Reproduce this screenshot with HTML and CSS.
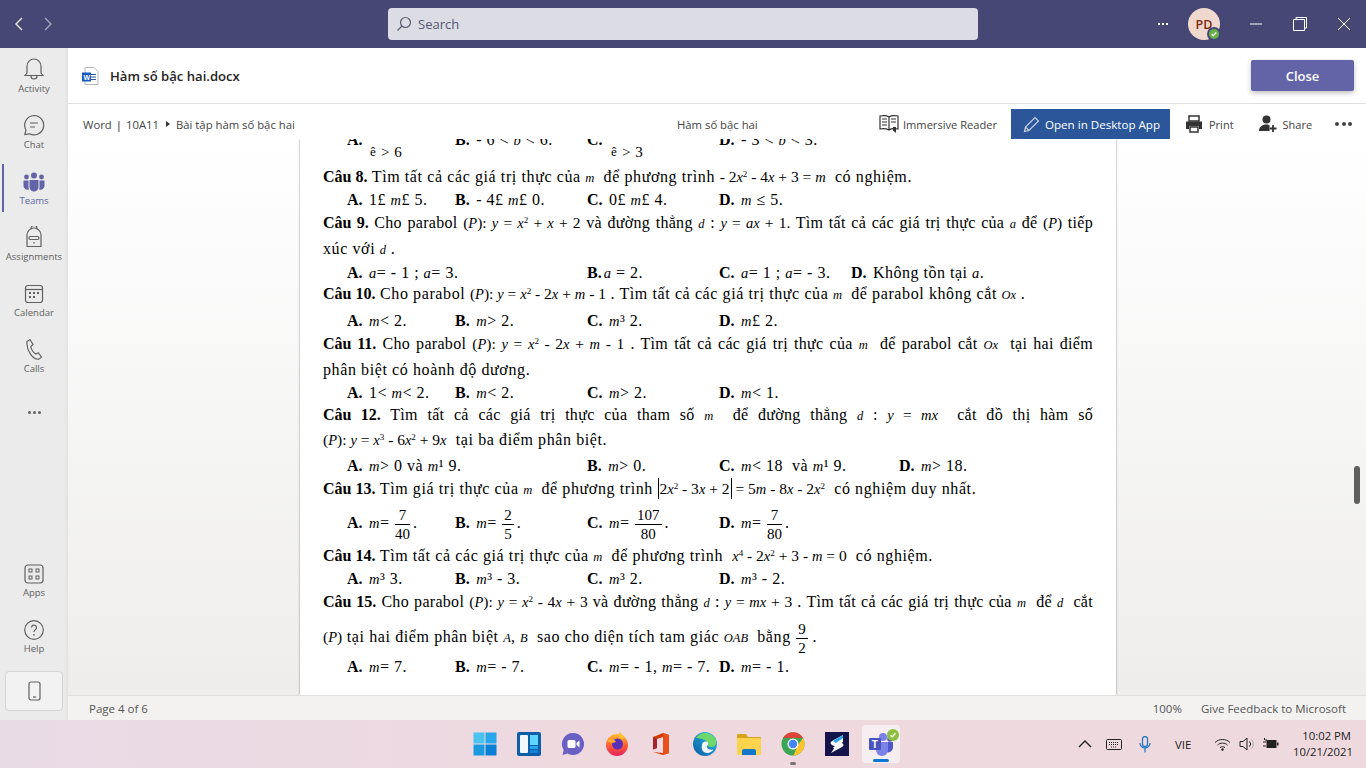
FILE: index.html
```html
<!DOCTYPE html>
<html lang="vi">
<head>
<meta charset="utf-8">
<title>Hàm số bậc hai.docx</title>
<link rel="stylesheet" href="styles.css">
</head>
<body>
<div class="app">
  <header class="titlebar">
    <div class="nav">
      <svg width="12" height="16" viewBox="0 0 12 16"><path d="M9 2 3 8l6 6" class="st-w"/></svg>
      <svg width="12" height="16" viewBox="0 0 12 16"><path d="m3 2 6 6-6 6" class="st-dim"/></svg>
    </div>
    <div class="search">
      <svg width="16" height="16" viewBox="0 0 16 16"><circle cx="9.500" cy="6.500" r="5" class="st-s"/><path d="M6 10 1.500 14.500" class="st-s"/></svg>
      <span>Search</span>
    </div>
    <div class="title-right">
      <span class="dots-w"><i></i><i></i><i></i></span>
      <span class="avatar">PD<span class="presence"><svg width="10" height="10" viewBox="0 0 10 10"><path d="m2.700 5.200 1.600 1.500 3-3.200" class="st-check"/></svg></span></span>
      <span class="win-btns">
        <svg width="14" height="14" viewBox="0 0 14 14"><path d="M1 7h12" class="st-wt"/></svg>
        <svg width="16" height="16" viewBox="0 0 16 16"><path d="M1.500 3.500h11v11h-11zM4 3.500V1.500h10.500V12h-2" class="st-wt"/></svg>
        <svg width="14" height="14" viewBox="0 0 14 14"><path d="m1 1 12 12M13 1 1 13" class="st-wt"/></svg>
      </span>
    </div>
  </header>

  <div class="main">
    <nav class="rail">
      <div class="rail-item">
        <svg width="20" height="22" viewBox="0 0 20 22"><path d="M3 15V8a7 7 0 0 1 14 0v7l2 2.500H1zM7 18a3 3 0 0 0 6 0" class="st-r"/></svg>
        <span>Activity</span>
      </div>
      <div class="rail-item">
        <svg width="22" height="22" viewBox="0 0 22 22"><path d="M11 1.500a9.700 9.700 0 1 1-4.500 18.300L1.800 20.500l1.200-4.500A9.700 9.700 0 0 1 11 1.500zM7 9h8M7 13h5" class="st-r"/></svg>
        <span>Chat</span>
      </div>
      <div class="rail-item active">
        <svg width="22" height="20" viewBox="0 0 22 20"><g class="fill-p"><circle cx="11" cy="3.500" r="3"/><circle cx="3.500" cy="5" r="2.400"/><circle cx="18.500" cy="5" r="2.400"/><path d="M6.500 8h9v7a4.500 4.500 0 0 1-9 0zM.5 8.500h5V15q0 1 .4 2.400A4 4 0 0 1 .5 13zM16.500 8.500h5V13a4 4 0 0 1-5.400 4.400q.4-1.400.4-2.400z"/></g></svg>
        <span>Teams</span>
      </div>
      <div class="rail-item">
        <svg width="18" height="22" viewBox="0 0 18 22"><path d="M2 20.500V9a7 7 0 0 1 14 0v11.500zM6 3.500v-1a3 3 0 0 1 6 0v1M5.500 10.500h7a1 1 0 0 1 0 3h-7a1 1 0 0 1 0-3zM9 16v1.500" class="st-r"/></svg>
        <span>Assignments</span>
      </div>
      <div class="rail-item">
        <svg width="20" height="20" viewBox="0 0 20 20"><rect x="1.500" y="1.500" width="17" height="17" rx="2.500" class="st-r"/><path d="M1.500 5.500h17" class="st-r"/><g class="fill-g"><rect x="5" y="8" width="2" height="2"/><rect x="9" y="8" width="2" height="2"/><rect x="13" y="8" width="2" height="2"/><rect x="5" y="12" width="2" height="2"/><rect x="9" y="12" width="2" height="2"/></g></svg>
        <span>Calendar</span>
      </div>
      <div class="rail-item">
        <svg width="18" height="22" viewBox="0 0 18 22"><path d="M2 3.500 5 1.500l3 5-2.200 2c.5 3 2.500 6 5 7.500l2.500-1.300 3.200 4.500-2.800 2C8 22 1 12 2 3.500z" class="st-r"/></svg>
        <span>Calls</span>
      </div>
      <div class="rail-more"><i></i><i></i><i></i></div>
      <div class="rail-spacer"></div>
      <div class="rail-item">
        <svg width="20" height="20" viewBox="0 0 20 20"><rect x="1" y="1" width="18" height="18" rx="3" class="st-r"/><rect x="5" y="5" width="3" height="3" class="st-r1"/><rect x="12" y="5" width="3" height="3" class="st-r1"/><rect x="5" y="12" width="3" height="3" class="st-r1"/><rect x="12" y="12" width="3" height="3" class="st-r1"/></svg>
        <span>Apps</span>
      </div>
      <div class="rail-item">
        <svg width="20" height="20" viewBox="0 0 20 20"><circle cx="10" cy="10" r="9.300" class="st-r"/><path d="M7.500 7.500a2.500 2.500 0 1 1 3.800 2.200c-1 .6-1.300 1-1.300 2.300" class="st-r"/><circle cx="10" cy="14.800" r=".9" class="fill-g"/></svg>
        <span>Help</span>
      </div>
      <div class="rail-phone">
        <svg width="13" height="20" viewBox="0 0 13 20"><rect x="1" y="1" width="11" height="18" rx="2" class="st-r"/><path d="M5 16h3" class="st-r"/></svg>
      </div>
    </nav>

    <section class="viewer">
      <div class="file-head">
        <svg width="18" height="18" viewBox="0 0 18 18">
          <path d="M4 .5h9l4 4v13H4z" fill="#fff" stroke="#b8b8b8"/>
          <path d="M10 7.500h5M10 10h5M10 12.500h5" stroke="#2b579a"/>
          <rect x="1" y="5.500" width="9" height="9" fill="#185abd"/>
          <text x="2.500" y="12.500" class="w-letter">W</text>
        </svg>
        <span class="file-name">Hàm số bậc hai.docx</span>
        <button class="close-btn">Close</button>
      </div>

      <div class="ribbon">
        <div class="crumbs">Word <span class="sep">|</span> 10A11 <span class="tri"></span> Bài tập hàm số bậc hai</div>
        <div class="doc-title">Hàm số bậc hai</div>
        <div class="rb-item reader">
          <svg width="21" height="20" viewBox="0 0 21 20"><path d="M10 3C8 1.500 4 1.500 1 2v13c3-.5 6-.5 9 1 2-1.500 6-1.500 9-1V2c-3-.5-7-.5-9 1zM10 3v13M3 5h5M3 8h5M3 11h5M12 5h5M12 8h5" class="st-d"/><path d="M14 13h3v6l-3-2.500z" fill="#333"/></svg>
          <span>Immersive Reader</span>
        </div>
        <div class="open-desktop">
          <svg width="17" height="17" viewBox="0 0 17 17"><path d="M1.500 15.500 2.500 11 12 1.500l3.500 3.500L6 14.500zM2.500 11 6 14.500" class="st-pen"/></svg>
          <span>Open in Desktop App</span>
        </div>
        <div class="rb-item print">
          <svg width="18" height="18" viewBox="0 0 18 18"><path d="M4 1h10v5H4z" fill="none" stroke="#333" stroke-width="1.500"/><path d="M1 6.500h16V14h-3v-3H4v3H1z" fill="#333"/><path d="M5 12h8v5H5z" fill="none" stroke="#333" stroke-width="1.500"/></svg>
          <span>Print</span>
        </div>
        <div class="rb-item share">
          <svg width="18" height="18" viewBox="0 0 18 18"><circle cx="7.500" cy="4.500" r="4" fill="#333"/><path d="M0 16c0-4 3-6.500 7.500-6.500 1.500 0 2.500.3 3 .6V16z" fill="#333"/><path d="M14 10v7M10.500 13.500h7" stroke="#333" stroke-width="1.800"/></svg>
          <span>Share</span>
        </div>
        <div class="rb-dots"><i></i><i></i><i></i></div>
      </div>

      <div class="doc">
        <article class="page">
          <div class="opts o-std cut"><span><b>A.</b></span><span><b>B.</b> - 6 &lt; <em>b</em> &lt; 6.</span><span><b>C.</b></span><span><b>D.</b> - 3 &lt; <em>b</em> &lt; 3.</span></div>
          <div class="opts o-brace cut2"><span class="brace-row"><span class="brk">ê</span>&gt; 6</span><span class="brace-row"><span class="brk">ê</span>&gt; 3</span></div>

          <p class="ln g5"><b>Câu 8.</b> Tìm tất cả các giá trị thực của <em>m</em>&nbsp; để phương trình <span class="math">- 2<em>x</em><sup>2</sup> - 4<em>x</em> + 3 = <em>m</em></span>&nbsp; có nghiệm.</p>
          <div class="opts o-std g3"><span><b>A.</b> 1£ <em>m</em>£ 5.</span><span><b>B.</b> - 4£ <em>m</em>£ 0.</span><span><b>C.</b> 0£ <em>m</em>£ 4.</span><span><b>D.</b> <em>m</em> ≤ 5.</span></div>

          <p class="ln just g3"><b>Câu 9.</b> Cho parabol <span class="math">(<em>P</em>): <em>y</em> = <em>x</em><sup>2</sup> + <em>x</em> + 2</span> và đường thẳng <em>d</em> : <span class="math"><em>y</em> = <em>ax</em> + 1.</span> Tìm tất cả các giá trị thực của <em>a</em> để <span class="math">(<em>P</em>)</span> tiếp</p>
          <p class="ln g6">xúc với <em>d</em> .</p>
          <div class="opts o-wide g4"><span><b>A.</b> <em>a</em>= - 1 ; <em>a</em>= 3.</span><span><b>B.</b><em>a</em> = 2.</span><span><b>C.</b> <em>a</em>= 1 ; <em>a</em>= - 3.</span><span><b>D.</b> Không tồn tại <em>a</em>.</span></div>

          <p class="ln g1"><b>Câu 10.</b> Cho parabol <span class="math">(<em>P</em>): <em>y</em> = <em>x</em><sup>2</sup> - 2<em>x</em> + <em>m</em> - 1</span> . Tìm tất cả các giá trị thực của <em>m</em>&nbsp; để parabol không cắt <em>Ox</em> .</p>
          <div class="opts o-std g7"><span><b>A.</b> <em>m</em>&lt; 2.</span><span><b>B.</b> <em>m</em>&gt; 2.</span><span><b>C.</b> <em>m</em>³ 2.</span><span><b>D.</b> <em>m</em>£ 2.</span></div>

          <p class="ln just g3"><b>Câu 11.</b> Cho parabol <span class="math">(<em>P</em>): <em>y</em> = <em>x</em><sup>2</sup> - 2<em>x</em> + <em>m</em> - 1</span> . Tìm tất cả các giá trị thực của <em>m</em>&nbsp; để parabol cắt <em>Ox</em>&nbsp; tại hai điểm</p>
          <p class="ln g6">phân biệt có hoành độ dương.</p>
          <div class="opts o-std g3"><span><b>A.</b> 1&lt; <em>m</em>&lt; 2.</span><span><b>B.</b> <em>m</em>&lt; 2.</span><span><b>C.</b> <em>m</em>&gt; 2.</span><span><b>D.</b> <em>m</em>&lt; 1.</span></div>

          <p class="ln just g2"><b>Câu 12.</b> Tìm tất cả các giá trị thực của tham số <em>m</em>&nbsp; để đường thẳng <em>d</em> : <span class="math"><em>y</em> = <em>mx</em></span>&nbsp; cắt đồ thị hàm số</p>
          <p class="ln g5"><span class="math">(<em>P</em>): <em>y</em> = <em>x</em><sup>3</sup> - 6<em>x</em><sup>2</sup> + 9<em>x</em></span>&nbsp; tại ba điểm phân biệt.</p>
          <div class="opts o-d12 g6"><span><b>A.</b> <em>m</em>&gt; 0 và <em>m</em>¹ 9.</span><span><b>B.</b> <em>m</em>&gt; 0.</span><span><b>C.</b> <em>m</em>&lt; 18&nbsp; và <em>m</em>¹ 9.</span><span><b>D.</b> <em>m</em>&gt; 18.</span></div>

          <p class="ln g3"><b>Câu 13.</b> Tìm giá trị thực của <em>m</em>&nbsp; để phương trình <span class="math"><span class="abs">2<em>x</em><sup>2</sup> - 3<em>x</em> + 2</span> = 5<em>m</em> - 8<em>x</em> - 2<em>x</em><sup>2</sup></span>&nbsp; có nghiệm duy nhất.</p>
          <div class="opts o-std g14">
            <span><b>A.</b> <em>m</em>= <span class="frac"><span>7</span><span>40</span></span>.</span>
            <span><b>B.</b> <em>m</em>= <span class="frac"><span>2</span><span>5</span></span>.</span>
            <span><b>C.</b> <em>m</em>= <span class="frac"><span>107</span><span>80</span></span>.</span>
            <span><b>D.</b> <em>m</em>= <span class="frac"><span>7</span><span>80</span></span>.</span>
          </div>

          <p class="ln g13"><b>Câu 14.</b> Tìm tất cả các giá trị thực của <em>m</em>&nbsp; để phương trình&nbsp; <span class="math"><em>x</em><sup>4</sup> - 2<em>x</em><sup>2</sup> + 3 - <em>m</em> = 0</span>&nbsp; có nghiệm.</p>
          <div class="opts o-std g3"><span><b>A.</b> <em>m</em>³ 3.</span><span><b>B.</b> <em>m</em>³ - 3.</span><span><b>C.</b> <em>m</em>³ 2.</span><span><b>D.</b> <em>m</em>³ - 2.</span></div>

          <p class="ln just g3"><b>Câu 15.</b> Cho parabol <span class="math">(<em>P</em>): <em>y</em> = <em>x</em><sup>2</sup> - 4<em>x</em> + 3</span> và đường thẳng <em>d</em> : <span class="math"><em>y</em> = <em>mx</em> + 3</span> . Tìm tất cả các giá trị thực của <em>m</em>&nbsp; để <em>d</em>&nbsp; cắt</p>
          <p class="ln g15"><span class="math">(<em>P</em>)</span> tại hai điểm phân biệt <em>A</em>, <em>B</em>&nbsp; sao cho diện tích tam giác <em>OAB</em>&nbsp; bằng <span class="frac"><span>9</span><span>2</span></span> .</p>
          <div class="opts o-std g10"><span><b>A.</b> <em>m</em>= 7.</span><span><b>B.</b> <em>m</em>= - 7.</span><span><b>C.</b> <em>m</em>= - 1, <em>m</em>= - 7.</span><span><b>D.</b> <em>m</em>= - 1.</span></div>
        </article>
        <div class="thumb"></div>
      </div>

      <div class="statusbar">
        <span class="pg">Page 4 of 6</span>
        <span class="zoom">100%</span>
        <span class="fb">Give Feedback to Microsoft</span>
      </div>
    </section>
  </div>

  <footer class="taskbar">
    <div class="tb-icons">
      <span class="tb">
        <svg width="24" height="24" viewBox="0 0 24 24"><rect x=".5" y=".5" width="11" height="11" fill="#4cc2f1"/><rect x="12.500" y=".5" width="11" height="11" fill="#28a8ea"/><rect x=".5" y="12.500" width="11" height="11" fill="#1a9bdf"/><rect x="12.500" y="12.500" width="11" height="11" fill="#0a7fd6"/></svg>
      </span>
      <span class="tb">
        <svg width="24" height="24" viewBox="0 0 24 24"><rect width="24" height="24" rx="2" fill="#0f5fa8"/><rect x="3" y="3" width="8" height="18" rx="1" fill="#f4f8fc"/><rect x="13" y="3" width="8" height="10" fill="#5fd4ff"/><rect x="13" y="14" width="8" height="3" fill="#29a5ee"/><rect x="13" y="18" width="8" height="3" fill="#1583d8"/></svg>
      </span>
      <span class="tb">
        <svg width="24" height="24" viewBox="0 0 24 24"><path d="M12 1a11 11 0 1 1-5.500 20.500L1.500 23l1.200-5A11 11 0 0 1 12 1z" fill="#6a60c4"/><rect x="6.500" y="8" width="8" height="8" rx="1.500" fill="#fff"/><path d="m15.500 11 3-2.500v7l-3-2.500z" fill="#fff"/></svg>
      </span>
      <span class="tb">
        <svg width="24" height="24" viewBox="0 0 24 24"><defs><linearGradient id="ff" x1="0" y1="0" x2="0" y2="1"><stop offset="0" stop-color="#ffbd2e"/><stop offset=".55" stop-color="#ff5a35"/><stop offset="1" stop-color="#e3215f"/></linearGradient></defs><circle cx="12" cy="13" r="11" fill="url(#ff)"/><path d="M14 0c3 2 5 4 6 7l-6-1z" fill="#ffc22e"/><circle cx="12.500" cy="12" r="5.500" fill="#5b2fb5"/><path d="M2 9c3-2 7-2 9 1l-4 1z" fill="#ffb02e"/></svg>
      </span>
      <span class="tb">
        <svg width="24" height="24" viewBox="0 0 24 24"><path d="M4 5 14 1l6 2v18l-6 2-10-3 10 1V5l-6 2v9l-4 1.500z" fill="#d83b01"/><path d="M14 1l6 2v18l-6 2z" fill="#e8501c"/><path d="M4 5l4 2v9l-4 1.500z" fill="#a4262c"/></svg>
      </span>
      <span class="tb">
        <svg width="24" height="24" viewBox="0 0 24 24"><defs><linearGradient id="ed" x1="0" y1="1" x2="1" y2="0"><stop offset="0" stop-color="#0c59a4"/><stop offset="1" stop-color="#2fc3e8"/></linearGradient></defs><circle cx="12" cy="12" r="12" fill="url(#ed)"/><path d="M3 6C7-1 19-1 23 8c1 4-1 7-5 7-3 0-3-2-3-3 0-4-8-6-12-6z" fill="#6fd86a"/><path d="M9 13c0-3 3-4.500 6-3 1 2-1 3.500-1 5s3 3.500 6.500 2.500C17 23 7 22 9 13z" fill="#f2f8fb"/></svg>
      </span>
      <span class="tb">
        <svg width="24" height="22" viewBox="0 0 24 22"><path d="M0 2a1 1 0 0 1 1-1h8l2 3h12a1 1 0 0 1 1 1v4H0z" fill="#d6a31a"/><rect y="5" width="24" height="17" rx="1" fill="#fbd34d"/><path d="M5 22v-4a2 2 0 0 1 2-2h10a2 2 0 0 1 2 2v4z" fill="#1478c8"/></svg>
      </span>
      <span class="tb chrome">
        <svg width="24" height="24" viewBox="0 0 24 24"><circle cx="12" cy="12" r="11.500" fill="#3aa655"/><path d="M2 6a11.500 11.500 0 0 1 20 0H12z" fill="#dc4438"/><path d="M22 6a11.500 11.500 0 0 1-9.500 17.500L17 13z" fill="#fbc42d"/><circle cx="12" cy="12" r="5.500" fill="#fff"/><circle cx="12" cy="12" r="4.200" fill="#4285f4"/></svg>
      </span>
      <span class="tb">
        <svg width="24" height="24" viewBox="0 0 24 24"><rect width="24" height="24" fill="#14134a"/><path d="M18 3 7 9c-2 1-2 3 0 4l4 2 7-5zM6 21l11-6c2-1 2-3 0-4l-1-.5-8 5 1 1z" fill="#f2f4f8"/><path d="M18 3 8 9l3 2 7-5z" fill="#2aa5e8"/></svg>
      </span>
      <span class="tb teams">
        <svg width="26" height="24" viewBox="0 0 26 24"><circle cx="15" cy="5" r="4" fill="#7b83eb"/><circle cx="22" cy="7" r="2.800" fill="#5059c9"/><path d="M18 10h7v6a5 5 0 0 1-7 4z" fill="#5059c9"/><path d="M8 10h12v8a6 6 0 0 1-12 0z" fill="#7b83eb"/><rect x="1" y="6" width="12" height="12" rx="1" fill="#4b53bc"/><text x="3.800" y="15.500" class="t-letter">T</text></svg>
        <span class="tb-badge"><svg width="10" height="10" viewBox="0 0 10 10"><path d="m2.500 5.200 1.800 1.700 3.200-3.600" class="st-check"/></svg></span>
      </span>
    </div>
    <div class="tray">
      <svg class="t-chev" width="14" height="8" viewBox="0 0 14 8"><path d="m1 7 6-6 6 6" class="st-k"/></svg>
      <svg class="t-kbd" width="16" height="11" viewBox="0 0 16 11"><rect x=".5" y=".5" width="15" height="10" rx="1" class="st-k1"/><path d="M3 3.500h10M3 5.500h10M5 8h6" class="st-k1 dash"/></svg>
      <svg class="t-mic" width="12" height="17" viewBox="0 0 12 17"><rect x="3.500" y=".5" width="5" height="10" rx="2.500" class="st-mic"/><path d="M1 7a5 5 0 0 0 10 0M6 12v4.500" class="st-mic"/></svg>
      <span class="t-lang">VIE</span>
      <svg class="t-wifi" width="17" height="13" viewBox="0 0 17 13"><path d="M1 4.500c4-4 11-4 15 0M3.500 7c2.700-2.500 7.300-2.500 10 0M6 9.500c1.300-1 3.700-1 5 0" class="st-k1"/><circle cx="8.500" cy="11.500" r="1.200" fill="#222"/></svg>
      <svg class="t-vol" width="16" height="14" viewBox="0 0 16 14"><path d="M1 4.500h3L8 1v12L4 9.500H1z" class="st-k1"/><path d="M10.500 4.500a3.500 3.500 0 0 1 0 5" class="st-k1"/><path d="M12.500 2.500a6.500 6.500 0 0 1 0 9" class="st-vol"/></svg>
      <svg class="t-bat" width="16" height="12" viewBox="0 0 16 12"><rect x="3.500" y="2" width="10" height="8" fill="#222"/><rect x="14" y="4.500" width="1.500" height="3" fill="#222"/><path d="M0 4h3M0 8h3M1.500 0v2M3 1v2" stroke="#222"/></svg>
      <div class="clock"><div>10:02 PM</div><div>10/21/2021</div></div>
    </div>
  </footer>
</div>
</body>
</html>
```

FILE: styles.css
```css
* { box-sizing: border-box; }
html, body { margin: 0; height: 100%; }
body { font-family: "Open Sans", "Liberation Sans", sans-serif; overflow: hidden; color: #252423; }
.app { width: 1366px; height: 768px; display: flex; flex-direction: column; overflow: hidden; }

/* stroke helpers */
svg { display: block; flex: none; }
.st-w, .st-dim, .st-s, .st-wt, .st-r, .st-r1, .st-d, .st-pen, .st-k, .st-k1, .st-mic, .st-vol, .st-check { fill: none; }
.st-w { stroke: #f2f2f6; stroke-width: 1.300; }
.st-dim { stroke: #a9a9c3; stroke-width: 1.300; }
.st-s { stroke: #5c5c75; stroke-width: 1.200; }
.st-wt { stroke: #fff; stroke-width: 1; }
.st-r { stroke: #616161; stroke-width: 1.200; }
.st-r1 { stroke: #616161; stroke-width: 1; }
.st-d { stroke: #333; stroke-width: 1.200; }
.st-pen { stroke: #c6d2e4; stroke-width: 1.200; }
.st-k { stroke: #222; stroke-width: 1.400; }
.st-k1 { stroke: #222; stroke-width: 1; }
.dash { stroke-dasharray: 1 1; }
.st-mic { stroke: #2a7ac4; stroke-width: 1.300; }
.st-vol { stroke: #aaa; stroke-width: 1; }
.st-check { stroke: #fff; stroke-width: 1.300; }
.fill-p { fill: #6264a7; }
.fill-g { fill: #616161; }

/* title bar */
.titlebar { height: 48px; flex: none; background: #464775; display: flex; align-items: center; position: relative; }
.nav { width: 388px; display: flex; gap: 17px; padding-left: 13px; flex: none; }
.search { width: 590px; height: 32px; background: #dcdce4; border-radius: 4px; display: flex; align-items: center; gap: 6px; padding-left: 8px; font-size: 13px; color: #555770; flex: none; }
.title-right { flex: 1; display: flex; align-items: center; }
.dots-w { display: flex; gap: 2px; margin-left: 180px; }
.dots-w i { width: 2px; height: 2px; background: #fff; display: block; }
.avatar { width: 32px; height: 32px; border-radius: 50%; background: #f1d8cf; color: #7f2a10; font-size: 12.500px; font-weight: 600; display: flex; align-items: center; justify-content: center; margin-left: 20px; position: relative; }
.presence { position: absolute; right: -1px; bottom: -1px; width: 14px; height: 14px; border-radius: 50%; background: #6bb14a; border: 2px solid #464775; display: flex; align-items: center; justify-content: center; }
.win-btns { display: flex; align-items: center; margin-left: 29px; }
.win-btns svg:nth-child(2) { margin-left: 29px; }
.win-btns svg:nth-child(3) { margin-left: 29px; }

/* rail */
.main { flex: 1; display: flex; min-height: 0; }
.rail { width: 68px; flex: none; background: #ebebeb; display: flex; flex-direction: column; box-shadow: inset -3px 0 3px -2px #dedede; position: relative; padding-top: 7px; }
.rail-item { height: 56px; display: flex; flex-direction: column; align-items: center; justify-content: flex-end; color: #616161; font-size: 9.500px; line-height: 14px; padding-bottom: 15px; gap: 2px; position: relative; flex: none; }
.rail-item.active { color: #6264a7; }
.rail-item.active::before { content: ""; position: absolute; left: 2px; top: -3px; width: 2px; height: 48px; background: #6264a7; }
.rail-more { height: 26px; display: flex; gap: 2px; align-items: center; justify-content: center; margin-top: 8px; flex: none; }
.rail-more i { width: 3px; height: 3px; border-radius: 50%; background: #616161; display: block; }
.rail-spacer { flex: 1; }
.rail-phone { width: 58px; height: 40px; margin: 0 0 9px 5px; border: 1px solid #d5d5d5; border-radius: 4px; background: #f2f2f2; display: flex; align-items: center; justify-content: center; flex: none; }

/* viewer */
.viewer { flex: 1; display: flex; flex-direction: column; min-width: 0; }
.file-head { height: 56px; flex: none; background: #fff; border-bottom: 1px solid #e1dfdd; display: flex; align-items: center; padding: 0 12px 0 13px; }
.w-letter { font: 700 7px "Liberation Sans", sans-serif; fill: #fff; }
.file-name { font-size: 13.100px; font-weight: 600; margin-left: 11px; color: #252423; }
.close-btn { margin-left: auto; width: 103px; height: 31px; border: 0; border-radius: 2px; background: #6264a7; color: #fff; font: 600 13px "Open Sans", sans-serif; box-shadow: 0 2px 5px rgba(0, 0, 0, .25); }

.ribbon { height: 35px; flex: none; background: #fff; display: flex; align-items: center; padding-left: 15px; font-size: 11.300px; color: #444; padding-top: 5px; }
.crumbs { width: 594px; flex: none; display: flex; align-items: center; gap: 4px; white-space: nowrap; }
.sep { color: #222; }
.tri { width: 0; height: 0; border-left: 4px solid #333; border-top: 3.500px solid transparent; border-bottom: 3.500px solid transparent; margin: 0 2px 0 3px; }
.doc-title { width: 202px; flex: none; }
.rb-item { display: flex; align-items: center; gap: 4px; flex: none; white-space: nowrap; }
.reader { width: 132px; font-size: 11.100px; gap: 3px; }
.open-desktop { width: 159px; height: 30px; background: #2b579a; color: #fff; display: flex; align-items: center; gap: 5px; padding-left: 12px; flex: none; white-space: nowrap; font-size: 11.600px; }
.print { margin-left: 15px; gap: 6px; font-size: 11px; }
.share { margin-left: 25px; gap: 6px; font-size: 11px; }
.rb-dots { display: flex; gap: 2.500px; margin-left: 23px; }
.rb-dots i { width: 4px; height: 4px; border-radius: 50%; background: #444; display: block; }

/* document */
.doc { flex: 1; min-height: 0; background: linear-gradient(#fff, #eeedec); position: relative; padding-left: 232px; overflow: hidden; }
.page { width: 816px; height: 100%; background: #fff; box-shadow: 0 0 2px rgba(0, 0, 0, .45); padding: 0 23px; font-family: "Liberation Serif", "Times New Roman", serif; font-size: 16px; color: #000; overflow: hidden; }
.thumb { position: absolute; right: 6px; top: 327px; width: 6px; height: 38px; border-radius: 3px; background: #5f5f5f; }
.ln { margin: 0; height: 20px; line-height: 20px; white-space: nowrap; letter-spacing: .6px; }
.ln b, .ln em, .ln .math, .ln .frac { letter-spacing: 0; }
.just { text-align: justify; text-align-last: justify; white-space: nowrap; letter-spacing: .3px; }
.page em { font-size: 12.500px; }
.page .math { font-size: 15.500px; }
.page .math em, .opts em { font-size: 14.500px; }
.page sup { font-size: 9px; line-height: 0; vertical-align: 5px; }
.opts { display: grid; height: 20px; line-height: 20px; padding-left: 24px; align-items: center; white-space: nowrap; letter-spacing: .5px; }
.opts b { margin-right: 2px; letter-spacing: 0; }
.o-std { grid-template-columns: 108px 132px 132px auto; }
.o-wide { grid-template-columns: 240px 132px 132px auto; }
.o-d12 { grid-template-columns: 240px 132px 180px auto; }
.o-brace { grid-template-columns: 241px auto; padding-left: 47px; font-size: 15px; }
.brace-row { display: flex; align-items: center; gap: 1px; }
.brk { font-size: 13px; width: 10px; }
.cut { margin-top: -9px; }
.cut2 { margin-top: -8px; }
.abs { border-left: 1px solid #000; border-right: 1px solid #000; padding: 2px 1px; }
.frac { display: inline-flex; flex-direction: column; align-items: center; vertical-align: middle; margin: -12px 3px -12px 1px; line-height: 18px; font-size: 15px; letter-spacing: 0; }
.ln .frac { margin-right: 0; }
.frac span:first-child { border-bottom: 1px solid #000; padding: 0 2px; align-self: stretch; text-align: center; }
.g1 { margin-top: 1px; } .g2 { margin-top: 2px; } .g3 { margin-top: 3px; } .g4 { margin-top: 4px; }
.g5 { margin-top: 5px; } .g6 { margin-top: 6px; } .g7 { margin-top: 7px; } .g10 { margin-top: 10px; }
.g13 { margin-top: 13px; } .g14 { margin-top: 14px; } .g15 { margin-top: 15px; }

/* status */
.statusbar { height: 25px; flex: none; background: #f3f2f1; border-top: 1px solid #e1dfdd; display: flex; align-items: center; font-size: 11.500px; color: #555; padding-left: 21px; }
.zoom { margin-left: auto; }
.fb { margin: 0 20px 0 19px; }

/* taskbar */
.taskbar { height: 48px; flex: none; background: linear-gradient(90deg, #e9dbe6, #efd9df 45%, #edd9de); display: flex; align-items: center; padding-left: 463px; }
.tb-icons { display: flex; }
.tb { width: 44px; height: 38px; display: flex; align-items: center; justify-content: center; position: relative; }
.chrome::after { content: ""; position: absolute; left: 19px; bottom: -2px; width: 6px; height: 3px; border-radius: 2px; background: #777; }
.teams { width: 38px; margin-left: 3px; background: #f6eef1; border-radius: 4px; }
.teams::after { content: ""; position: absolute; left: 11px; bottom: 1px; width: 16px; height: 3px; border-radius: 2px; background: #0a78d4; }
.t-letter { font: 700 10px "Liberation Sans", sans-serif; fill: #fff; }
.tb-badge { position: absolute; right: 1px; top: 4px; width: 12px; height: 12px; border-radius: 50%; background: #8cbf3f; display: flex; align-items: center; justify-content: center; }
.tray { margin-left: auto; display: flex; align-items: center; font-size: 11.300px; color: #222; padding-right: 15px; }
.t-kbd { margin-left: 14px; }
.t-mic { margin-left: 17px; }
.t-lang { margin-left: 24px; width: 26px; }
.t-wifi { margin-left: 13px; }
.t-vol { margin-left: 8px; }
.t-bat { margin-left: 8px; }
.clock { margin-left: 14px; text-align: right; line-height: 16px; width: 58px; }
```
